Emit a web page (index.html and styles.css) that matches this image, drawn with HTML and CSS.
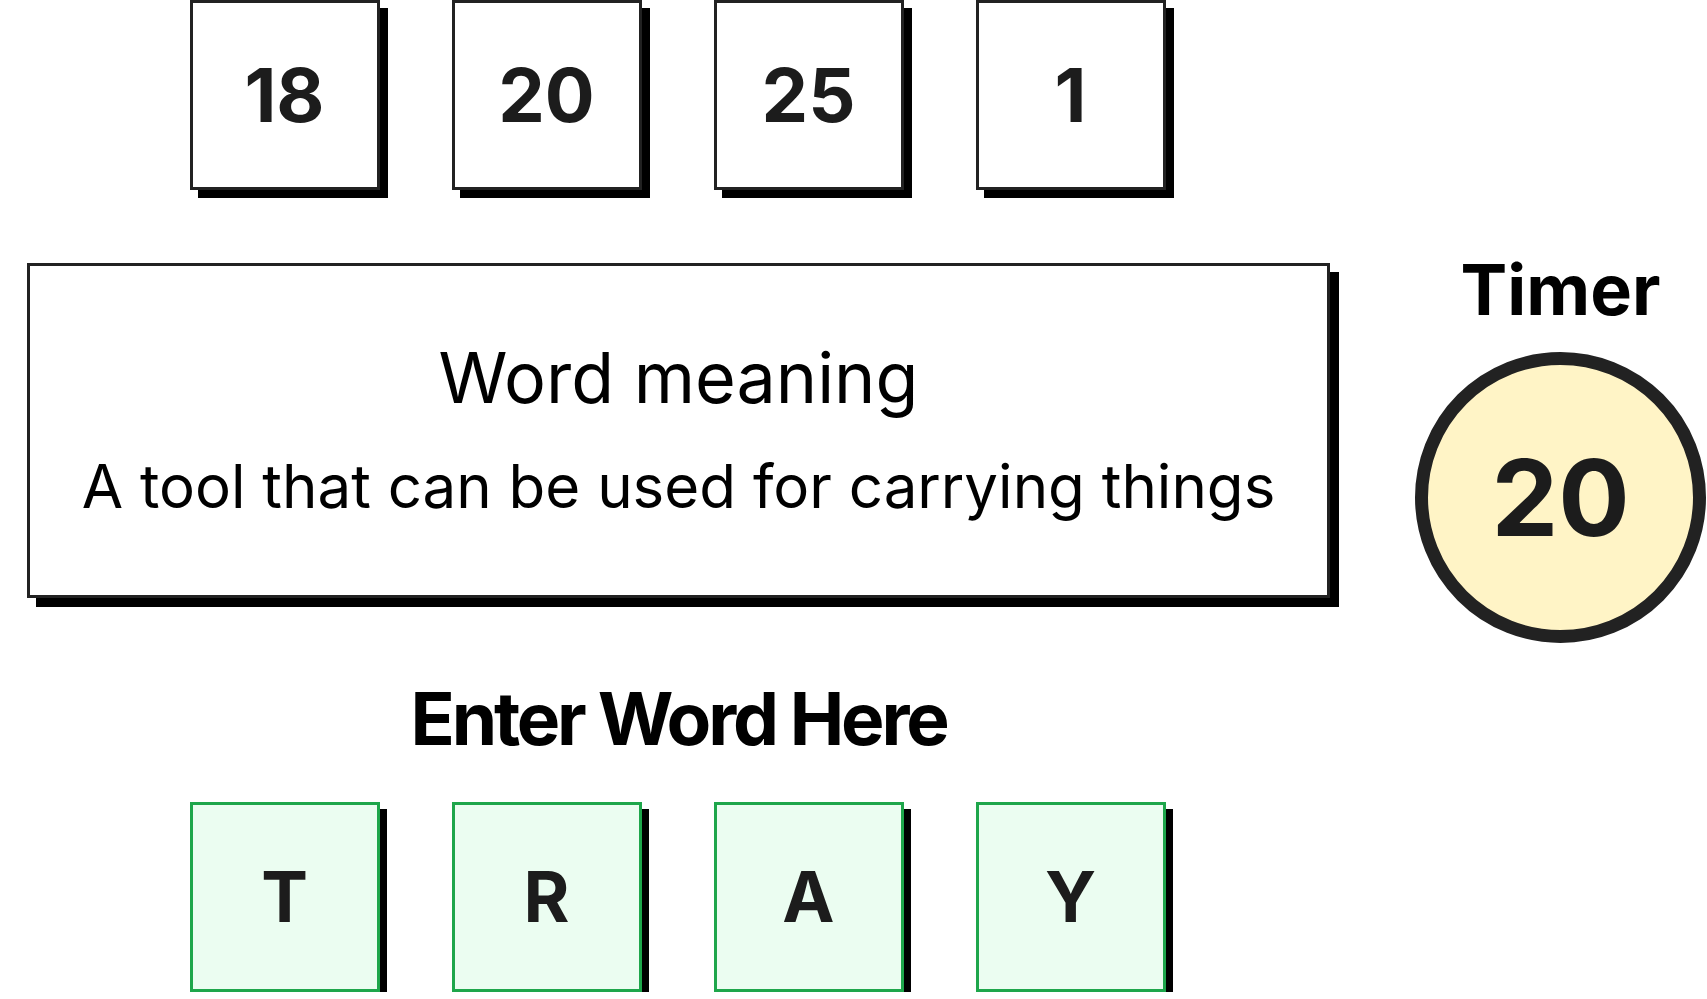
FILE: index.html
```html
<!DOCTYPE html>
<html lang="en">
<head>
    <meta charset="UTF-8">
    <meta name="viewport" content="width=device-width, initial-scale=1.0">
    <title>Word Game</title>
    <link rel="stylesheet" href="styles.css">
</head>
<body>
<div class="layout">
    <div class="game">
        <div class="numbers">
            <div class="num-box">18</div>
            <div class="num-box">20</div>
            <div class="num-box">25</div>
            <div class="num-box">1</div>
        </div>

        <div class="meaning">
            <h2 class="meaning-title">Word meaning</h2>
            <p class="meaning-text">A tool that can be used for carrying things</p>
        </div>

        <h1 class="prompt">Enter Word Here</h1>

        <div class="letters">
            <div class="letter-box">T</div>
            <div class="letter-box">R</div>
            <div class="letter-box">A</div>
            <div class="letter-box">Y</div>
        </div>
    </div>

    <div class="side">
        <div class="timer-label">Timer</div>
        <div class="timer-circle">20</div>
    </div>
</div>
</body>
</html>
```

FILE: styles.css
```css
    body {
        margin: 0px;
        padding: 0px;
        background: #ffffff;
        font-family: Inter, "Noto Sans", sans-serif;
        color: #000;
    }

    .layout {
        display: flex;
        gap: 85px;
        padding-left: 27px;
    }

    .game {
        width: 1303px;
        display: flex;
        flex-direction: column;
        align-items: center;
    }

    .numbers,
    .letters {
        display: flex;
        gap: 72px;
        margin-right: 2px;
    }

    .num-box,
    .letter-box {
        width: 190px;
        height: 190px;
        box-sizing: border-box;
        display: flex;
        align-items: center;
        justify-content: center;
        font-weight: 700;
        color: #1c1c1c;
        line-height: 1;
    }

    .num-box {
        border: 3px solid #222;
        background: #fff;
        box-shadow: 8px 8px 0 #000;
        font-size: 74px;
    }

    .letter-box {
        border: 3px solid #1ea64b;
        background: #ebfdf1;
        box-shadow: 7px 7px 0 #000;
        font-size: 70px;
    }

    .meaning {
        width: 100%;
        height: 335px;
        box-sizing: border-box;
        margin-top: 73px;
        padding-top: 70px;
        border: 3px solid #222;
        box-shadow: 9px 9px 0 #000;
        text-align: center;
    }

    .meaning-title {
        margin: 0;
        font-size: 70px;
        font-weight: 400;
        line-height: 84px;
    }

    .meaning-text {
        margin: 30px 0 0 0;
        font-size: 60px;
        line-height: 72px;
    }

    .prompt {
        margin: 77px 0 0 0;
        font-size: 73px;
        font-weight: 700;
        line-height: 88px;
        letter-spacing: -3.2px;
    }

    .letters {
        margin-top: 39px;
    }

    .side {
        width: 291px;
        padding-top: 248px;
        display: flex;
        flex-direction: column;
        align-items: center;
    }

    .timer-label {
        font-size: 70px;
        font-weight: 700;
        line-height: 84px;
    }

    .timer-circle {
        margin-top: 20px;
        width: 291px;
        height: 291px;
        box-sizing: border-box;
        border: 13px solid #222;
        border-radius: 50%;
        background: #fff4c6;
        display: flex;
        align-items: center;
        justify-content: center;
        font-size: 106px;
        font-weight: 700;
        line-height: 1;
        color: #1c1c1c;
    }
```
